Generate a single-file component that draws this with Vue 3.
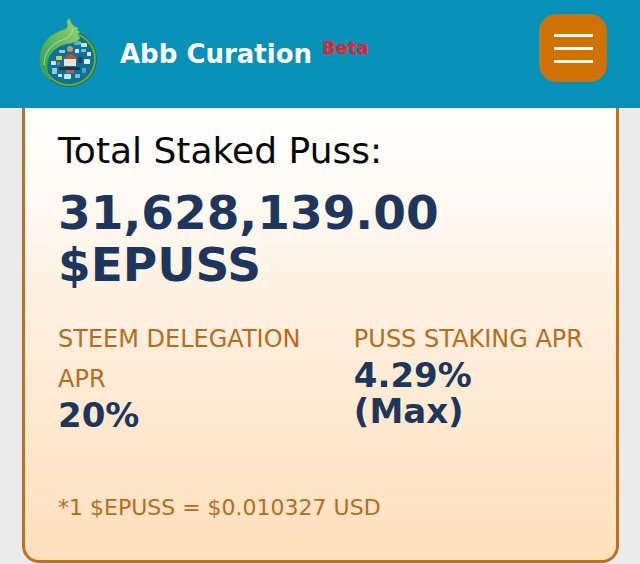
<template>
  <div class="page">
    <header class="topbar">
      <a href="#" class="brand">
        <svg class="logo" viewBox="0 0 60 76" aria-hidden="true">
          <defs>
            <linearGradient id="leaf" x1="0" y1="1" x2="1" y2="0">
              <stop offset="0" stop-color="#2f9a4a" />
              <stop offset="1" stop-color="#9ad678" />
            </linearGradient>
          </defs>
          <circle cx="30" cy="45" r="26" fill="#0a7199" stroke="#2b7048" stroke-width="4" />
          <circle cx="30" cy="45" r="26" fill="none" stroke="#5cab58" stroke-width="2" />
          <!-- telas e envelopes -->
          <rect
            v-for="(p, i) in pecas"
            :key="i"
            :x="p.x"
            :y="p.y"
            :width="p.w"
            :height="p.h"
            :fill="p.cor"
            rx="0.8"
          />
          <circle cx="31" cy="35" r="3" fill="#d58c68" />
          <path d="M25 45 Q31 35 38 45 Z" fill="#b94f3c" />
          <rect x="25" y="45" width="12" height="7" fill="#e6e2df" />
          <rect x="20" y="53" width="21" height="3" fill="#24343f" />
          <rect x="27" y="56" width="8" height="3" fill="#c4574b" />
          <!-- folha -->
          <path
            d="M12 66 C1 60 -1 46 3 34 C7 24 14 20 21 17 C25 15 30 15 28 10 C27 7 29 5 31 4 C31 9 35 13 40 14 L38 16 L41 18 L39 20 L41 24 C38 29 33 29 27 30 C19 32 12 37 9 45 C7 52 8 60 12 66 Z"
            fill="url(#leaf)"
            stroke="#48a65b"
            stroke-width="0.7"
          />
          <path d="M5 51 C5 38 13 30 23 26 Q33 23 34 15" fill="none" stroke="#c2e6a0" stroke-width="0.8" />
        </svg>
        <span class="brand-name">Abb Curation</span>
        <span class="beta">Beta</span>
      </a>
      <button type="button" class="menu-btn" aria-label="Menu">
        <span class="bar"></span>
        <span class="bar"></span>
        <span class="bar"></span>
      </button>
    </header>

    <main class="content">
      <section class="card">
        <h2 class="card-title">Total Staked Puss:</h2>
        <p class="total">{{ totalFormatado }} $EPUSS</p>

        <div class="stats">
          <div v-for="stat in stats" :key="stat.label" class="stat">
            <p class="stat-label">{{ stat.label }}</p>
            <p class="stat-value">{{ stat.valor }}</p>
          </div>
        </div>

        <p class="note">*1 $EPUSS = ${{ preco }} USD</p>
      </section>
    </main>
  </div>
</template>

<script setup>
import { ref, computed } from "vue";

const total = ref(31628139);
const preco = ref("0.010327");

const totalFormatado = computed(() =>
  total.value.toLocaleString("en-US", { minimumFractionDigits: 2 })
);

const stats = [
  { label: "STEEM DELEGATION APR", valor: "20%" },
  { label: "PUSS STAKING APR", valor: "4.29%\n(Max)" }
];

const pecas = [
  { x: 35, y: 27, w: 7, h: 4, cor: "#55b9c9" },
  { x: 42, y: 29, w: 6, h: 4, cor: "#c9e3e0" },
  { x: 20, y: 36, w: 6, h: 3, cor: "#9ed0d8" },
  { x: 36, y: 35, w: 4, h: 4, cor: "#d8e8e6" },
  { x: 42, y: 35, w: 5, h: 3, cor: "#7fc4d0" },
  { x: 17, y: 42, w: 6, h: 4, cor: "#c6cf62" },
  { x: 12, y: 47, w: 5, h: 4, cor: "#d6dde0" },
  { x: 18, y: 48, w: 3, h: 3, cor: "#c96a5c" },
  { x: 39, y: 43, w: 4, h: 6, cor: "#273f55" },
  { x: 45, y: 45, w: 6, h: 5, cor: "#d9e9ec" },
  { x: 48, y: 38, w: 4, h: 4, cor: "#e3e6e4" },
  { x: 13, y: 54, w: 5, h: 6, cor: "#8ccbdc" },
  { x: 19, y: 60, w: 4, h: 3, cor: "#d8ece9" },
  { x: 25, y: 60, w: 7, h: 5, cor: "#c5e4ec" },
  { x: 36, y: 60, w: 5, h: 4, cor: "#7dbfcf" },
  { x: 43, y: 54, w: 4, h: 5, cor: "#4aa6c0" }
];
</script>

<style>
body {
  margin: 0;
  background: #ebebeb;
}
</style>

<style scoped>
.page {
  min-height: 100vh;
  box-sizing: border-box;
  background: #ebebeb;
  font-family: "DejaVu Sans", Verdana, sans-serif;
}

.topbar {
  display: flex;
  justify-content: space-between;
  align-items: flex-start;
  padding: 14px 33px 18px 39px;
  background: #0891b8;
}

.brand {
  display: flex;
  align-items: center;
  color: white;
  text-decoration: none;
}

.logo {
  width: 60px;
  height: 76px;
  margin-right: 21px;
}

.brand-name {
  padding-top: 4px;
  font-size: 26px;
  line-height: 32px;
  font-weight: bold;
}

.beta {
  margin-left: 10px;
  padding-bottom: 8px;
  color: #e8212b;
  font-size: 18px;
  line-height: 20px;
  font-weight: bold;
}

.menu-btn {
  display: flex;
  flex-direction: column;
  align-items: center;
  justify-content: center;
  gap: 10px;
  width: 68px;
  height: 68px;
  padding: 0;
  background: #d07203;
  border: 1px solid #a87b3b;
  border-radius: 17px;
  cursor: pointer;
}

.bar {
  width: 39px;
  height: 3px;
  background: #fffaf0;
}

.content {
  padding: 0 21px 2px 22px;
}

.card {
  padding: 22px 33px 32px;
  background: linear-gradient(#ffffff, #fffaf4 20%, #fff0e0 43%, #ffe0bd);
  border: 3px solid #bd7121;
  border-top: none;
  border-radius: 0 0 17px 17px;
}

.card-title {
  margin: 0;
  color: #080808;
  font-size: 36px;
  line-height: 42px;
  font-weight: normal;
}

.total {
  margin: 15px 0 28px;
  color: #1f365c;
  font-size: 47px;
  line-height: 52px;
  font-weight: bold;
}

.stats {
  display: grid;
  grid-template-columns: 1fr auto;
  gap: 40px;
}

.stat-label, .stat-value, .note {
  margin: 0;
}

.stat-label {
  margin-bottom: -2px;
  color: #b56d22;
  font-size: 24px;
  line-height: 40px;
}

.stat-value {
  color: #1f365c;
  font-size: 34px;
  line-height: 36px;
  font-weight: bold;
  white-space: pre-line;
}

.note {
  margin-top: 55px;
  color: #b56d22;
  font-size: 22px;
  line-height: 40px;
}
</style>
